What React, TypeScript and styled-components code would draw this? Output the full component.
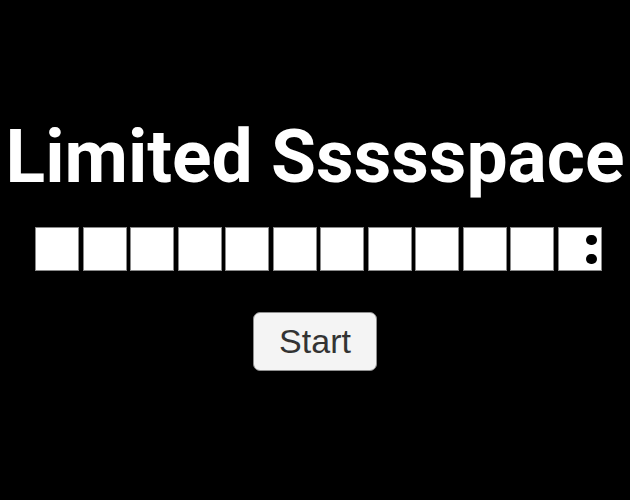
import styled, { createGlobalStyle } from 'styled-components'

const GlobalStyle = createGlobalStyle`
  html, body {
    margin: 0;
    padding: 0;
    background: #000;
  }
  body {
    font-family: Roboto, "Liberation Sans", sans-serif;
  }
`

const Screen = styled.div`
  width: 630px;
  height: 500px;
  display: flex;
  flex-direction: column;
  align-items: center;
  box-sizing: border-box;
  padding-top: 112px;
`

const Title = styled.h1`
  margin: 0;
  font-family: Roboto, "Liberation Sans", sans-serif;
  font-weight: 700;
  font-size: 73.2px;
  line-height: 90px;
  color: #fff;
  white-space: nowrap;
`

const SnakeRow = styled.div`
  display: flex;
  gap: 3.5px;
  padding-left: 7px;
  margin-top: 25px;
`

const Cell = styled.div`
  position: relative;
  width: 44px;
  height: 44px;
  box-sizing: border-box;
  background: #fff;
  border: 1px solid #8a8a8a;
`

const Eye = styled.span<{ $top: number }>`
  position: absolute;
  left: 27.5px;
  top: ${(p) => p.$top}px;
  width: 10.7px;
  height: 10.7px;
  border-radius: 50%;
  background: #000;
`

const StartButton = styled.button`
  margin-top: 41px;
  width: 124px;
  height: 59px;
  padding: 0;
  font-family: "Liberation Sans", Arial, sans-serif;
  font-size: 34px;
  color: #333;
  background: #f4f4f4;
  border: 1px solid #8f8f8f;
  border-radius: 7px;
  cursor: pointer;
`

const App = () => {
  const cells = Array.from({ length: 12 }, (_, i) => i)

  return (
    <>
      <GlobalStyle />
      <Screen>
        <Title>Limited Ssssspace</Title>
        <SnakeRow>
          {cells.map((i) => (
            <Cell key={i}>
              {i === cells.length - 1 && (
                <>
                  <Eye $top={6.5} />
                  <Eye $top={25.5} />
                </>
              )}
            </Cell>
          ))}
        </SnakeRow>
        <StartButton>Start</StartButton>
      </Screen>
    </>
  )
}

export default App
